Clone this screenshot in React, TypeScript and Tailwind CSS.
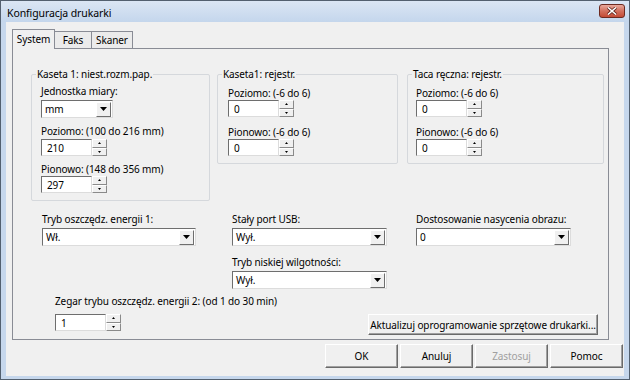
import React from "react";

const font = { fontFamily: '"Noto Sans", "DejaVu Sans", sans-serif' };

const Spinner = () => (
  <div className="flex flex-col w-[15px] h-full">
    <div className="flex-1 flex items-center justify-center bg-[#f0f0f0] border border-t-[#ffffff] border-l-[#ffffff] border-r-[#8a8a8a] border-b-[#8a8a8a]">
      <svg width="3" height="2" viewBox="0 0 3 2">
        <path d="M1.5 0 L3 2 L0 2 Z" fill="#000" />
      </svg>
    </div>
    <div className="flex-1 flex items-center justify-center bg-[#f0f0f0] border border-t-[#ffffff] border-l-[#ffffff] border-r-[#8a8a8a] border-b-[#8a8a8a]">
      <svg width="3" height="2" viewBox="0 0 3 2">
        <path d="M0 0 L3 0 L1.5 2 Z" fill="#000" />
      </svg>
    </div>
  </div>
);

const SpinBox = ({ value }: { value: string }) => (
  <div className="flex h-[17px]">
    <div className="w-[51px] h-full bg-white border border-t-[#6e6e6e] border-l-[#6e6e6e] border-r-[#dcdcdc] border-b-[#dcdcdc] flex items-center pl-[5px] text-[10px] leading-none">
      {value}
    </div>
    <Spinner />
  </div>
);

const Combo = ({ value, w }: { value: string; w: string }) => (
  <div className={`${w} h-[18px] bg-white border border-t-[#6e6e6e] border-l-[#6e6e6e] border-r-[#dcdcdc] border-b-[#dcdcdc] flex items-center`}>
    <span className="flex-1 pl-[3px] text-[10px] leading-none">{value}</span>
    <div className="w-[15px] h-[15px] mr-[1px] bg-[#f0f0f0] border border-t-[#ffffff] border-l-[#ffffff] border-r-[#6e6e6e] border-b-[#6e6e6e] flex items-center justify-center">
      <svg width="7" height="4" viewBox="0 0 7 4">
        <path d="M0 0 L7 0 L3.5 4 Z" fill="#000" />
      </svg>
    </div>
  </div>
);

const Label = ({ children }: { children: React.ReactNode }) => (
  <div className="h-[14px] text-[10px] leading-[14px] whitespace-nowrap">{children}</div>
);

const Group = ({
  title,
  className,
  children,
}: {
  title: string;
  className: string;
  children: React.ReactNode;
}) => (
  <div className={`relative border border-[#d5d8dc] rounded-[2px] ${className}`}>
    <span className="absolute -top-[8px] left-[4px] px-[1px] bg-[#f0f0f0] text-[10px] leading-[14px] whitespace-nowrap">
      {title}
    </span>
    {children}
  </div>
);

const Button = ({
  children,
  className,
  disabled,
}: {
  children: React.ReactNode;
  className: string;
  disabled?: boolean;
}) => (
  <div
    className={`flex items-center justify-center whitespace-nowrap bg-[#f0f0f0] border border-t-[#ffffff] border-l-[#ffffff] border-r-[#6a6a6a] border-b-[#6a6a6a] shadow-[inset_-1px_-1px_0_#a0a0a0] text-[10px] leading-none ${
      disabled ? "text-[#a0a0a0]" : "text-black"
    } ${className}`}
  >
    {children}
  </div>
);

export default function App() {
  return (
    <div
      style={font}
      className="w-[630px] h-[380px] bg-[#c6d7ec] border border-[#53606f] flex flex-col text-black tracking-[-0.1px]"
    >
      {/* title bar */}
      <div className="h-[21px] flex items-start bg-gradient-to-b from-[#dbe6f4] to-[#c4d6ec]">
        <span className="ml-[6px] mt-[5px] text-[10.5px] leading-[14px]">Konfiguracja drukarki</span>
        <div className="ml-auto mr-[4px] mt-[3px] w-[26px] h-[14px] rounded-[3px] border border-[#6d2a20] bg-gradient-to-b from-[#e8a99c] via-[#d2705e] to-[#c34a35] flex items-center justify-center">
          <svg width="10" height="8" viewBox="0 0 10 8">
            <path d="M1 0.5 L9 7.5 M9 0.5 L1 7.5" stroke="#5a1d14" strokeWidth="3" />
            <path d="M1 0.5 L9 7.5 M9 0.5 L1 7.5" stroke="#ffffff" strokeWidth="1.6" />
          </svg>
        </div>
      </div>

      {/* client */}
      <div className="flex-1 mx-[5px] mb-[3px] bg-[#f0f0f0] flex flex-col">
        {/* tabs */}
        <div className="flex items-end h-[26px] pl-[6px] relative z-10">
          <div className="h-[20px] w-[43px] -mb-[1px] bg-[#f0f0f0] border border-b-0 border-[#898c95] flex items-center justify-center text-[10px]">
            System
          </div>
          <div className="h-[17px] w-[37px] border-t border-r border-[#898c95] bg-[#ebebeb] flex items-center justify-center text-[10px]">
            Faks
          </div>
          <div className="h-[17px] w-[41px] border-t border-r border-[#898c95] bg-[#ebebeb] flex items-center justify-center text-[10px]">
            Skaner
          </div>
        </div>

        {/* panel */}
        <div className="ml-[6px] w-[597px] h-[292px] border border-[#898c95] bg-[#f0f0f0] flex flex-col">
          {/* row 1 */}
          <div className="flex items-start pl-[18px] pt-[25px]">
            <Group title="Kaseta 1: niest.rozm.pap." className="w-[179px] h-[127px] pl-[9px] pt-[9px]">
              <Label>Jednostka miary:</Label>
              <div className="mt-[2px]">
                <Combo value="mm" w="w-[72px]" />
              </div>
              <div className="mt-[6px]">
                <Label>Poziomo: (100 do 216 mm)</Label>
              </div>
              <div className="mt-[1px]">
                <SpinBox value="210" />
              </div>
              <div className="mt-[6px]">
                <Label>Pionowo: (148 do 356 mm)</Label>
              </div>
              <SpinBox value="297" />
            </Group>

            <Group title="Kaseta1: rejestr." className="ml-[7px] w-[181px] h-[90px] pl-[10px] pt-[11px]">
              <Label>Poziomo: (-6 do 6)</Label>
              <SpinBox value="0" />
              <div className="mt-[8px]">
                <Label>Pionowo: (-6 do 6)</Label>
              </div>
              <SpinBox value="0" />
            </Group>

            <Group title="Taca ręczna: rejestr." className="ml-[9px] w-[197px] h-[90px] pl-[8px] pt-[11px]">
              <Label>Poziomo: (-6 do 6)</Label>
              <SpinBox value="0" />
              <div className="mt-[8px]">
                <Label>Pionowo: (-6 do 6)</Label>
              </div>
              <SpinBox value="0" />
            </Group>
          </div>

          {/* row 2 */}
          <div className="flex items-start mt-[11px] pl-[29px]">
            <div className="w-[154px]">
              <Label>Tryb oszczędz. energii 1:</Label>
              <div className="mt-[2px]">
                <Combo value="Wł." w="w-[154px]" />
              </div>
            </div>
            <div className="ml-[36px] w-[155px]">
              <Label>Stały port USB:</Label>
              <div className="mt-[2px]">
                <Combo value="Wył." w="w-[155px]" />
              </div>
              <div className="mt-[9px]">
                <Label>Tryb niskiej wilgotności:</Label>
              </div>
              <div className="mt-[2px]">
                <Combo value="Wył." w="w-[155px]" />
              </div>
            </div>
            <div className="ml-[29px] w-[155px]">
              <Label>Dostosowanie nasycenia obrazu:</Label>
              <div className="mt-[2px]">
                <Combo value="0" w="w-[155px]" />
              </div>
            </div>
          </div>

          {/* row 3 */}
          <div className="flex items-start mt-[5px] pl-[42px]">
            <div>
              <Label>Zegar trybu oszczędz. energii 2: (od 1 do 30 min)</Label>
              <div className="mt-[6px]">
                <SpinBox value="1" />
              </div>
            </div>
            <Button className="ml-auto mr-[10px] mt-[20px] w-[230px] h-[21px]">
              Aktualizuj oprogramowanie sprzętowe drukarki...
            </Button>
          </div>
        </div>

        {/* bottom buttons */}
        <div className="flex justify-end gap-[2px] mt-[4px] pr-[1px]">
          <Button className="w-[73px] h-[24px]">OK</Button>
          <Button className="w-[73px] h-[24px]">Anuluj</Button>
          <Button className="w-[73px] h-[24px]" disabled>
            Zastosuj
          </Button>
          <Button className="w-[73px] h-[24px]">Pomoc</Button>
        </div>
      </div>
    </div>
  );
}
